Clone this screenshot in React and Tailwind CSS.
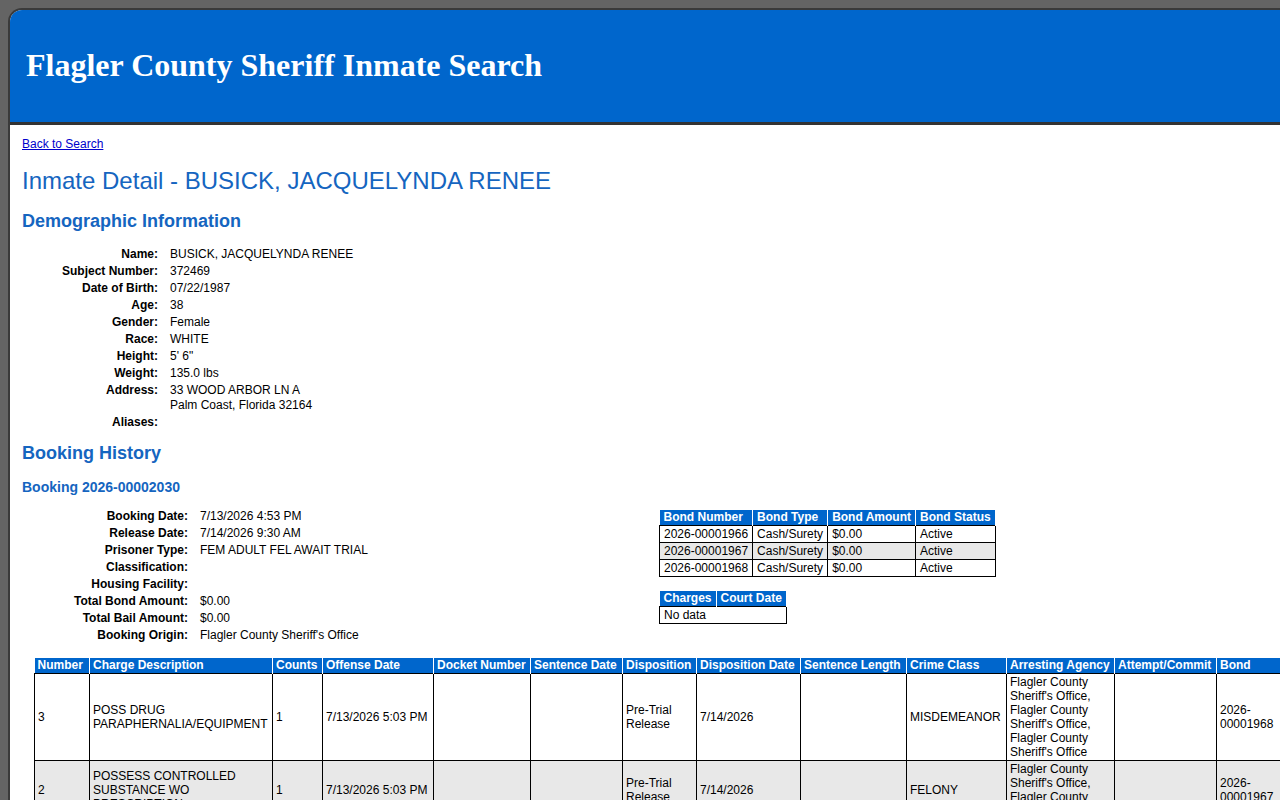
const DEMOGRAPHICS = [
  ["Name:", "BUSICK, JACQUELYNDA RENEE"],
  ["Subject Number:", "372469"],
  ["Date of Birth:", "07/22/1987"],
  ["Age:", "38"],
  ["Gender:", "Female"],
  ["Race:", "WHITE"],
  ["Height:", "5' 6\""],
  ["Weight:", "135.0 lbs"],
  ["Address:", ["33 WOOD ARBOR LN A", "Palm Coast, Florida 32164"]],
  ["Aliases:", ""],
];

const BOOKING = [
  ["Booking Date:", "7/13/2026 4:53 PM"],
  ["Release Date:", "7/14/2026 9:30 AM"],
  ["Prisoner Type:", "FEM ADULT FEL AWAIT TRIAL"],
  ["Classification:", ""],
  ["Housing Facility:", ""],
  ["Total Bond Amount:", "$0.00"],
  ["Total Bail Amount:", "$0.00"],
  ["Booking Origin:", "Flagler County Sheriff's Office"],
];

const BONDS = [
  ["2026-00001966", "Cash/Surety", "$0.00", "Active"],
  ["2026-00001967", "Cash/Surety", "$0.00", "Active"],
  ["2026-00001968", "Cash/Surety", "$0.00", "Active"],
];

const CHARGE_COLS = [
  ["Number", 55],
  ["Charge Description", 183],
  ["Counts", 50],
  ["Offense Date", 111],
  ["Docket Number", 97],
  ["Sentence Date", 92],
  ["Disposition", 74],
  ["Disposition Date", 104],
  ["Sentence Length", 106],
  ["Crime Class", 100],
  ["Arresting Agency", 108],
  ["Attempt/Commit", 102],
  ["Bond", 64],
];

const CHARGES = [
  [
    "3",
    "POSS DRUG PARAPHERNALIA/EQUIPMENT",
    "1",
    "7/13/2026 5:03 PM",
    "",
    "",
    "Pre-Trial Release",
    "7/14/2026",
    "",
    "MISDEMEANOR",
    "Flagler County Sheriff's Office, Flagler County Sheriff's Office, Flagler County Sheriff's Office",
    "",
    "2026-00001968",
  ],
  [
    "2",
    "POSSESS CONTROLLED SUBSTANCE WO PRESCRIPTION",
    "1",
    "7/13/2026 5:03 PM",
    "",
    "",
    "Pre-Trial Release",
    "7/14/2026",
    "",
    "FELONY",
    "Flagler County Sheriff's Office, Flagler County Sheriff's Office",
    "",
    "2026-00001967",
  ],
];

function InfoGrid({ rows, labelWidth }) {
  return (
    <div className="grid gap-x-3" style={{ gridTemplateColumns: `${labelWidth}px auto` }}>
      {rows.map(([label, value]) => (
        <div key={label} className="contents">
          <div className="py-px text-right font-bold leading-[15px]">{label}</div>
          <div className="py-px leading-[15px]">
            {Array.isArray(value) ? value.map((v) => <div key={v}>{v}</div>) : value}
          </div>
        </div>
      ))}
    </div>
  );
}

const th = "border-x border-white bg-[#0066cc] text-left font-bold leading-[15px] text-white whitespace-nowrap first:border-l-0";
const td = "border border-black py-px leading-[14px]";

export default function App() {
  return (
    <div className="h-[800px] w-[1280px] overflow-hidden bg-[#646464] pl-2 pt-2 font-['Liberation_Sans',Arial,sans-serif] text-[12px] text-black">
      <div className="min-h-[800px] w-[1300px] overflow-hidden rounded-tl-[14px] border-l-2 border-t-2 border-[#3a3a3a] bg-white">
        {/* header */}
        <div className="flex h-[115px] items-center border-b-[3px] border-[#333] bg-[#0066cc] pl-4">
          <h1 className="mt-[-2px] font-['Liberation_Serif','Times_New_Roman',serif] text-[32px] font-bold text-white">
            Flagler County Sheriff Inmate Search
          </h1>
        </div>

        <div className="pl-3 pt-[10px]">
          <a href="#" className="text-[12px] text-[#0000cc] underline">
            Back to Search
          </a>
          <h2 className="mt-[14px] text-[24px] leading-[28px] text-[#1565c0]">
            Inmate Detail - BUSICK, JACQUELYNDA RENEE
          </h2>
          <h3 className="mt-[15px] text-[18px] font-bold leading-[22px] text-[#1565c0]">
            Demographic Information
          </h3>
          <div className="mt-[14px]">
            <InfoGrid rows={DEMOGRAPHICS} labelWidth={136} />
          </div>

          <h3 className="mt-[11px] text-[18px] font-bold leading-[22px] text-[#1565c0]">
            Booking History
          </h3>
          <h4 className="mt-[15px] text-[14px] font-bold leading-[17px] text-[#1565c0]">
            Booking 2026-00002030
          </h4>

          <div className="mt-[12px] flex items-start">
            <div className="w-[637px]">
              <InfoGrid rows={BOOKING} labelWidth={166} />
            </div>
            <div className="pt-[2px]">
              <table className="border-collapse">
                <thead>
                  <tr>
                    {["Bond Number", "Bond Type", "Bond Amount", "Bond Status"].map((h) => (
                      <th key={h} className={`${th} px-[4px]`}>
                        {h}
                      </th>
                    ))}
                  </tr>
                </thead>
                <tbody>
                  {BONDS.map((b, i) => (
                    <tr key={b[0]} className={i === 1 ? "bg-[#e8e8e8]" : ""}>
                      {b.map((c, j) => (
                        <td key={j} className={`${td} whitespace-nowrap px-[4px]`} style={j === 3 ? { width: 80 } : undefined}>
                          {c}
                        </td>
                      ))}
                    </tr>
                  ))}
                </tbody>
              </table>

              <table className="mt-[14px] border-collapse">
                <thead>
                  <tr>
                    <th className={`${th} px-[4px]`}>Charges</th>
                    <th className={`${th} px-[4px]`}>Court Date</th>
                  </tr>
                </thead>
                <tbody>
                  <tr>
                    <td colSpan={2} className={`${td} px-[4px]`}>
                      No data
                    </td>
                  </tr>
                </tbody>
              </table>
            </div>
          </div>

          <table className="ml-[12px] mt-[14px] table-fixed border-collapse">
            <colgroup>
              {CHARGE_COLS.map(([h, w]) => (
                <col key={h} style={{ width: w }} />
              ))}
            </colgroup>
            <thead>
              <tr>
                {CHARGE_COLS.map(([h]) => (
                  <th key={h} className={`${th} px-[3px]`}>
                    {h}
                  </th>
                ))}
              </tr>
            </thead>
            <tbody>
              {CHARGES.map((row, i) => (
                <tr key={i} className={i === 1 ? "bg-[#e8e8e8]" : ""}>
                  {row.map((c, j) => (
                    <td key={j} className={`${td} px-[3px] align-middle`}>
                      {c}
                    </td>
                  ))}
                </tr>
              ))}
            </tbody>
          </table>
        </div>
      </div>
    </div>
  );
}
